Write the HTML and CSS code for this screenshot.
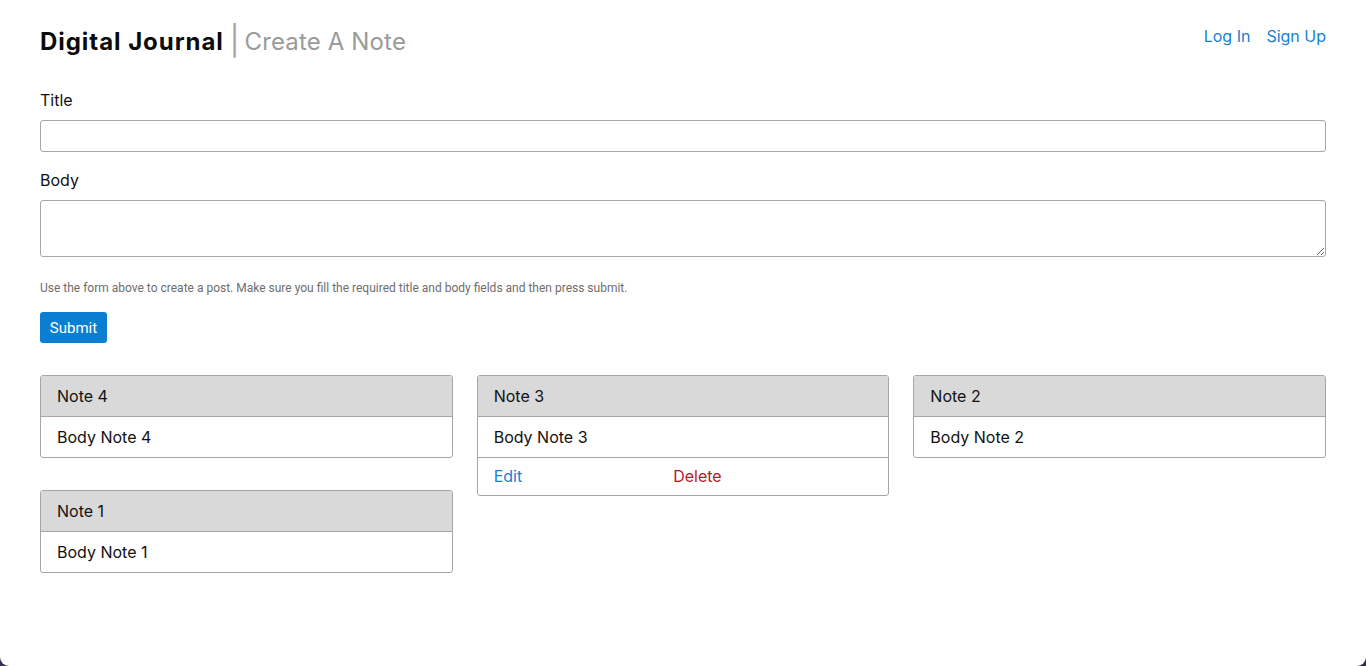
FILE: index.html
```html
<!DOCTYPE html>
<html lang="en">
<head>
<meta charset="utf-8">
<title>Digital Journal</title>
<link rel="stylesheet" href="styles.css">
</head>
<body>
<div class="page">
  <header class="topbar">
    <h1 class="brand"><span class="brand-name">Digital Journal</span><span class="sep">|</span><span class="sub">Create A Note</span></h1>
    <nav class="auth">
      <a href="#">Log In</a>
      <a href="#">Sign Up</a>
    </nav>
  </header>

  <form class="note-form">
    <label class="field-label" for="title">Title</label>
    <input class="field-input" id="title" type="text">
    <label class="field-label" for="body">Body</label>
    <textarea class="field-area" id="body"></textarea>
    <p class="help">Use the form above to create a post. Make sure you fill the required title and body fields and then press submit.</p>
    <button class="submit" type="button">Submit</button>
  </form>

  <section class="notes">
    <div class="col">
      <div class="card">
        <div class="card-head">Note 4</div>
        <div class="card-body">Body Note 4</div>
      </div>
      <div class="card">
        <div class="card-head">Note 1</div>
        <div class="card-body">Body Note 1</div>
      </div>
    </div>
    <div class="col">
      <div class="card">
        <div class="card-head">Note 3</div>
        <div class="card-body">Body Note 3</div>
        <div class="card-foot"><a href="#" class="edit">Edit</a><a href="#" class="delete">Delete</a></div>
      </div>
    </div>
    <div class="col">
      <div class="card">
        <div class="card-head">Note 2</div>
        <div class="card-body">Body Note 2</div>
      </div>
    </div>
  </section>
</div>
</body>
</html>
```
FILE: styles.css
```css
html {
  background: #2e3352;
  margin: 0;
}
body {
  margin: 0;
  font-family: Inter, "Noto Sans", sans-serif;
  color: #111;
}
.page {
  background: #fff;
  min-height: 666px;
  box-sizing: border-box;
  border-radius: 0 0 9px 9px;
  padding: 26px 40px 40px;
}
.topbar {
  display: flex;
  justify-content: space-between;
  align-items: flex-start;
}
.brand {
  margin: 0;
  font-size: 24px;
  line-height: 32px;
  font-weight: 400;
  display: flex;
  align-items: center;
}
.brand-name {
  font-weight: 700;
  letter-spacing: 0.95px;
  color: #0b0b0b;
}
.sep {
  color: #a8a39a;
  font-weight: 400;
  margin: 0 5px 0 6px;
  font-size: 29px;
  position: relative;
  top: -1px;
}
.sub {
  color: #9a9a9a;
  font-weight: 400;
  letter-spacing: 0.15px;
}
.auth {
  display: flex;
  gap: 16px;
  line-height: 20px;
}
.auth a {
  color: #1a7fd1;
  text-decoration: none;
  font-size: 16px;
}
.note-form {
  display: flex;
  flex-direction: column;
  align-items: flex-start;
  margin-top: 31px;
}
.field-label {
  font-size: 16px;
  line-height: 22px;
  color: #111;
}
.field-input,
.field-area {
  width: 100%;
  box-sizing: border-box;
  border: 1px solid #a8a8a8;
  border-radius: 3px;
  font-family: inherit;
  font-size: 16px;
  margin: 9px 0 0;
}
.field-input {
  height: 32px;
  margin-bottom: 17px;
}
.field-area {
  height: 57px;
  resize: vertical;
}
.help {
  margin: 24px 0 17px;
  font-family: Roboto, "Liberation Sans", sans-serif;
  font-size: 12px;
  line-height: 14px;
  color: #6e6e6e;
}
.submit {
  background: #0a7fd2;
  color: #fff;
  border: 0;
  border-radius: 3px;
  font-family: Roboto, "Liberation Sans", sans-serif;
  font-size: 15px;
  height: 31px;
  width: 67px;
  padding: 0;
}
.notes {
  display: flex;
  gap: 24px;
  margin-top: 32px;
  align-items: flex-start;
}
.col {
  flex: 1;
  display: flex;
  flex-direction: column;
  gap: 32px;
}
.card {
  border: 1px solid #a6a6a6;
  border-radius: 3px;
  overflow: hidden;
  font-size: 16px;
}
.card-head {
  background: #d9d9d9;
  height: 40px;
  line-height: 40px;
  padding: 0 16px;
  border-bottom: 1px solid #a6a6a6;
}
.card-body {
  height: 40px;
  line-height: 40px;
  padding: 0 16px;
}
.card-foot {
  border-top: 1px solid #a6a6a6;
  height: 37px;
  line-height: 37px;
  padding: 0 16px;
  display: flex;
}
.card-foot a {
  text-decoration: none;
}
.edit {
  color: #1a7fd1;
}
.delete {
  color: #c4121f;
  margin-left: 151px;
}
```
